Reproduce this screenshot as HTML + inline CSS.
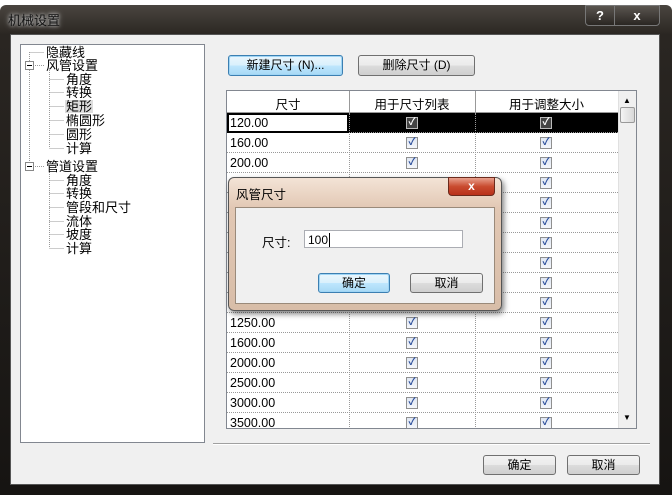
<!DOCTYPE html>
<html><head><meta charset="utf-8"><style>
*{box-sizing:border-box;margin:0;padding:0}
body{width:672px;height:495px;background:#fff;position:relative;overflow:hidden;font-family:"Liberation Sans","Noto Sans CJK SC",sans-serif;font-size:12px;color:#000}
.abs{position:absolute}
.frame{left:0;top:5px;width:672px;height:490px;background:linear-gradient(#4a4540,#2a2622 30px,#161412);border-radius:6px 6px 0 0}
.client{left:10px;top:34px;width:650px;height:451px;background:#f0f0f0;border:1px solid #555}
.btn{position:absolute;border:1px solid #707070;border-radius:3px;background:linear-gradient(#f2f2f2,#ebebeb 50%,#dcdcdc 51%,#cfcfcf);text-align:center;font-size:12px;white-space:nowrap}
.btn.def{border-color:#3c7fb1;background:linear-gradient(#eaf6fd,#d9f0fc 50%,#bee6fd 51%,#a7d9f5);box-shadow:inset 0 0 0 1px #9fd5f5}
.tree div{position:absolute;font-size:13px;line-height:13px;white-space:nowrap}
.row{position:absolute;left:0;width:391px;height:20px;border-bottom:1px dotted #999}
.row span{position:absolute;left:3px;top:3px;font-size:12.5px;z-index:1}
.cb{position:absolute;top:4px;width:12px;height:12px;border:1px solid #8f8f8f;background:linear-gradient(#dfe6f2,#f4f6fa);color:#2a4d9a;font-size:10px;line-height:10px;text-align:center;font-weight:bold}
.dlg{z-index:10}
</style></head><body>
<div class="abs frame"></div>
<div class="abs" style="left:8px;top:10px;color:#111;font-size:13px;text-shadow:0 0 6px #ccc,0 0 3px #bbb">机械设置</div>
<div class="abs" style="left:585px;top:5px;width:30px;height:21px;border:1px solid #777;border-radius:0 0 0 4px;background:linear-gradient(#5a5550,#2a2622);color:#fff;text-align:center;font-weight:bold;font-size:13px;line-height:19px">?</div>
<div class="abs" style="left:614px;top:5px;width:46px;height:21px;border:1px solid #777;border-radius:0 0 4px 0;background:linear-gradient(#5a5550,#2a2622);color:#fff;text-align:center;font-weight:bold;font-size:13px;line-height:19px">x</div>
<div class="abs client"></div>
<div class="abs" style="left:20px;top:44px;width:185px;height:399px;background:#fff;border:1px solid #828790"></div>
<div class="abs tree" style="left:0;top:0">
<svg class="abs" style="left:0;top:0" width="210" height="260"><g stroke="#999" stroke-dasharray="1,1" fill="none">
<path d="M29.5 52V166M29.5 52.5H44M35 65.5H44M35 166.5H44M49.5 70V148M49.5 79.5H64M49.5 92.5H64M49.5 106.5H64M49.5 120.5H64M49.5 134.5H64M49.5 148.5H64M49.5 172V248M49.5 180.5H64M49.5 193.5H64M49.5 207.5H64M49.5 221.5H64M49.5 234.5H64M49.5 248.5H64"/></g>
<rect x="25.5" y="61.5" width="8" height="8" fill="#fff" stroke="#888"/><path d="M27 65.5h5" stroke="#000"/>
<rect x="25.5" y="162.5" width="8" height="8" fill="#fff" stroke="#888"/><path d="M27 166.5h5" stroke="#000"/></svg>
<div style="left:46px;top:46px">隐藏线</div>
<div style="left:46px;top:59px">风管设置</div>
<div style="left:66px;top:73px">角度</div>
<div style="left:66px;top:86px">转换</div>
<div style="left:65px;top:100px;background:#ddd;padding:0 1px">矩形</div>
<div style="left:66px;top:114px">椭圆形</div>
<div style="left:66px;top:128px">圆形</div>
<div style="left:66px;top:142px">计算</div>
<div style="left:46px;top:160px">管道设置</div>
<div style="left:66px;top:174px">角度</div>
<div style="left:66px;top:187px">转换</div>
<div style="left:66px;top:201px">管段和尺寸</div>
<div style="left:66px;top:215px">流体</div>
<div style="left:66px;top:228px">坡度</div>
<div style="left:66px;top:242px">计算</div>
</div>
<div class="btn def" style="left:228px;top:55px;width:115px;height:21px;line-height:19px">新建尺寸 (N)...</div>
<div class="btn" style="left:358px;top:55px;width:117px;height:21px;line-height:19px">删除尺寸 (D)</div>
<div class="abs" style="left:226px;top:90px;width:411px;height:339px;background:#fff;border:1px solid #828790;overflow:hidden">
<div class="abs" style="left:0;top:0;width:391px;height:22px;border-bottom:1px solid #999;background:#fff"></div>
<div class="abs" style="left:0;top:3px;width:122px;text-align:center;font-size:12.5px">尺寸</div>
<div class="abs" style="left:122px;top:3px;width:126px;text-align:center;font-size:12.5px">用于尺寸列表</div>
<div class="abs" style="left:248px;top:3px;width:143px;text-align:center;font-size:12.5px">用于调整大小</div>
<div class="abs" style="left:122px;top:0;width:1px;height:22px;background:#999"></div>
<div class="abs" style="left:248px;top:0;width:1px;height:22px;background:#999"></div>
<div class="abs" style="left:391px;top:0;width:19px;height:339px;background:#f0f0f0;border-left:1px solid #e0e0e0"></div>
<div class="abs" style="left:396px;top:5px;font-size:8px">▲</div>
<div class="abs" style="left:393px;top:16px;width:15px;height:16px;border:1px solid #999;border-radius:2px;background:linear-gradient(90deg,#f4f4f4,#d8d8d8)"></div>
<div class="abs" style="left:396px;top:322px;font-size:8px">▼</div>
<div id="rows"></div>
<div class="abs" style="left:122px;top:22px;width:0;height:320px;border-left:1px dotted #999"></div>
<div class="abs" style="left:248px;top:22px;width:0;height:320px;border-left:1px dotted #999"></div>
</div>
<script>
var v=["120.00","160.00","200.00","250.00","315.00","400.00","500.00","630.00","800.00","1000.00","1250.00","1600.00","2000.00","2500.00","3000.00","3500.00"],h="";
for(var i=0;i<v.length;i++){var t=22+i*20;var sel=i==0;
h+='<div class="row" style="top:'+t+'px;'+(sel?'background:#000;':'')+'">'+(sel?'<div style="position:absolute;left:0;top:0;width:122px;height:20px;background:#fff;border:2px solid #000"></div>':'')+'<span>'+v[i]+'</span><div class="cb" style="left:179px;'+(sel?'background:#444;border-color:#bbb;color:#fff;':'')+'">✓</div><div class="cb" style="left:313px;'+(sel?'background:#444;border-color:#bbb;color:#fff;':'')+'">✓</div></div>';}
document.getElementById("rows").innerHTML=h;
</script>
<div class="abs" style="left:213px;top:443px;width:437px;height:2px;border-top:1px solid #a0a0a0;border-bottom:1px solid #fff"></div>
<div class="btn" style="left:483px;top:455px;width:73px;height:20px;line-height:18px">确定</div>
<div class="btn" style="left:567px;top:455px;width:73px;height:20px;line-height:18px">取消</div>
<!-- small dialog -->
<div class="abs dlg" style="left:228px;top:177px;width:274px;height:134px;border:1px solid #555;border-radius:6px;background:linear-gradient(#f3e3d6,#e2c8b4 30px,#d8bda8);box-shadow:2px 3px 6px rgba(0,0,0,.5)"></div>
<div class="abs dlg" style="left:236px;top:184px;font-size:12.5px">风管尺寸</div>
<div class="abs dlg" style="left:448px;top:177px;width:47px;height:19px;border:1px solid #6b2a1c;border-radius:0 0 4px 4px;background:linear-gradient(#e8a08c,#c94b2f 50%,#b8301a);color:#fff;text-align:center;font-weight:bold;line-height:17px">x</div>
<div class="abs dlg" style="left:235px;top:207px;width:260px;height:97px;background:#f0f0f0;border:1px solid #9a8a7a"></div>
<div class="abs dlg" style="left:262px;top:232px;font-size:12.5px">尺寸:</div>
<div class="abs dlg" style="left:304px;top:230px;width:159px;height:18px;background:#fff;border:1px solid #abadb3;padding:2px 3px;font-size:12px">100<span style="border-left:1px solid #000;margin-left:1px"></span></div>
<div class="btn def dlg" style="left:318px;top:273px;width:72px;height:20px;line-height:18px">确定</div>
<div class="btn dlg" style="left:410px;top:273px;width:73px;height:20px;line-height:18px">取消</div>
</body></html>
